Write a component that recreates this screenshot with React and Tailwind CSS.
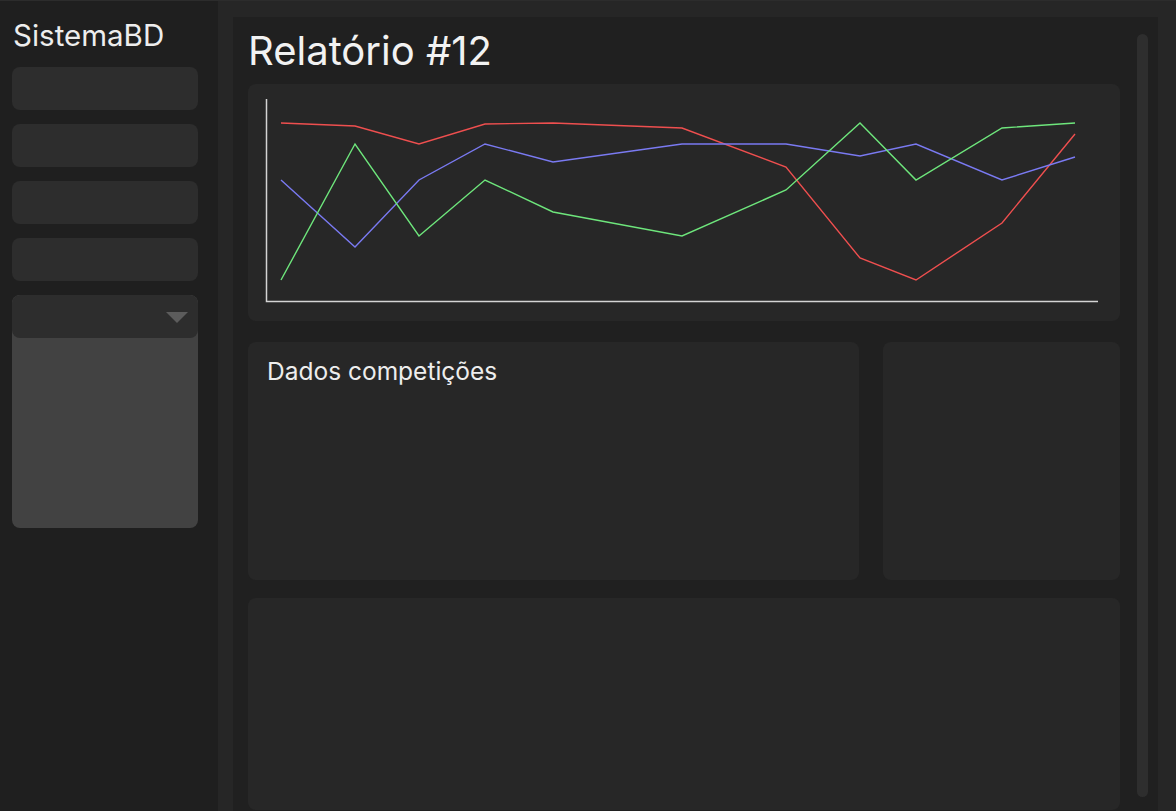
import React from 'react';

const xs = [33, 107, 171, 237, 305, 434, 538, 612, 668, 754, 827];
const series = [
  { color: '#ef4f4f', ys: [39, 42, 60, 40, 39, 44, 83, 174, 196, 139, 50] },
  { color: '#7a7af2', ys: [96, 163, 96, 60, 78, 60, 60, 72, 60, 96, 73] },
  { color: '#6ee67c', ys: [196, 60, 152, 96, 128, 152, 106, 39, 96, 44, 39] },
];

function Chart() {
  return (
    <svg width="872" height="237" viewBox="0 0 872 237" className="block">
      <polyline points="18.5,15 18.5,217.5 850,217.5" fill="none" stroke="#d4d4d4" strokeWidth="1.5" />
      {series.map(s => (
        <polyline
          key={s.color}
          points={s.ys.map((y, i) => `${xs[i]},${y}`).join(' ')}
          fill="none"
          stroke={s.color}
          strokeWidth="1.4"
        />
      ))}
    </svg>
  );
}

function Sidebar() {
  return (
    <aside className="w-[218px] shrink-0 bg-[#1f1f1f] pl-3 pr-5 pt-[16px]">
      <h2 className="text-[29.5px] leading-[36px] text-[#ededed] pl-px">SistemaBD</h2>
      <nav className="mt-[14px] flex flex-col gap-[14px]">
        {[1, 2, 3, 4].map(i => (
          <div key={i} className="h-[43px] rounded-lg bg-[#2d2d2d]" />
        ))}
        {/* dropdown */}
        <div className="h-[233px] rounded-lg bg-[#424242] overflow-hidden">
          <div className="h-[43px] rounded-lg bg-[#2d2d2d] flex items-center justify-end pr-[10px]">
            <div className="w-0 h-0 border-l-[11px] border-r-[11px] border-t-[11px] border-l-transparent border-r-transparent border-t-[#5c5c5c] mt-[2px]" />
          </div>
        </div>
      </nav>
    </aside>
  );
}

export default function App() {
  return (
    <div
      className="w-[1176px] h-[811px] overflow-hidden flex border-t border-[#2c2c2c] bg-[#262626]"
      style={{ fontFamily: 'Inter, "Noto Sans", sans-serif' }}
    >
      <Sidebar />
      <main className="flex-1 pl-[15px] pt-[16px] pr-[19px]">
        <div className="h-full bg-[#202020] flex pl-[15px] pr-[10px] pt-[14px]">
          <div className="flex-1 flex flex-col">
            <h1 className="text-[40px] leading-[40px] h-[40px] mb-[13px] text-[#f2f2f2]">Relatório #12</h1>
            <section className="h-[237px] rounded-lg bg-[#272727]">
              <Chart />
            </section>
            <div className="mt-[21px] flex gap-[24px]">
              <section className="flex-1 h-[238px] rounded-lg bg-[#272727] pl-[19px] pt-[13px]">
                <h3 className="text-[24.5px] leading-[32px] text-[#ededed]">Dados competições</h3>
              </section>
              <section className="w-[237px] h-[238px] rounded-lg bg-[#272727]" />
            </div>
            <section className="mt-[18px] h-[212px] rounded-lg bg-[#272727]" />
          </div>
          {/* scrollbar */}
          <div className="ml-[17px] mt-[3px] w-[11px] h-[763px] rounded-full bg-[#2e2e2e]" />
        </div>
      </main>
    </div>
  );
}
